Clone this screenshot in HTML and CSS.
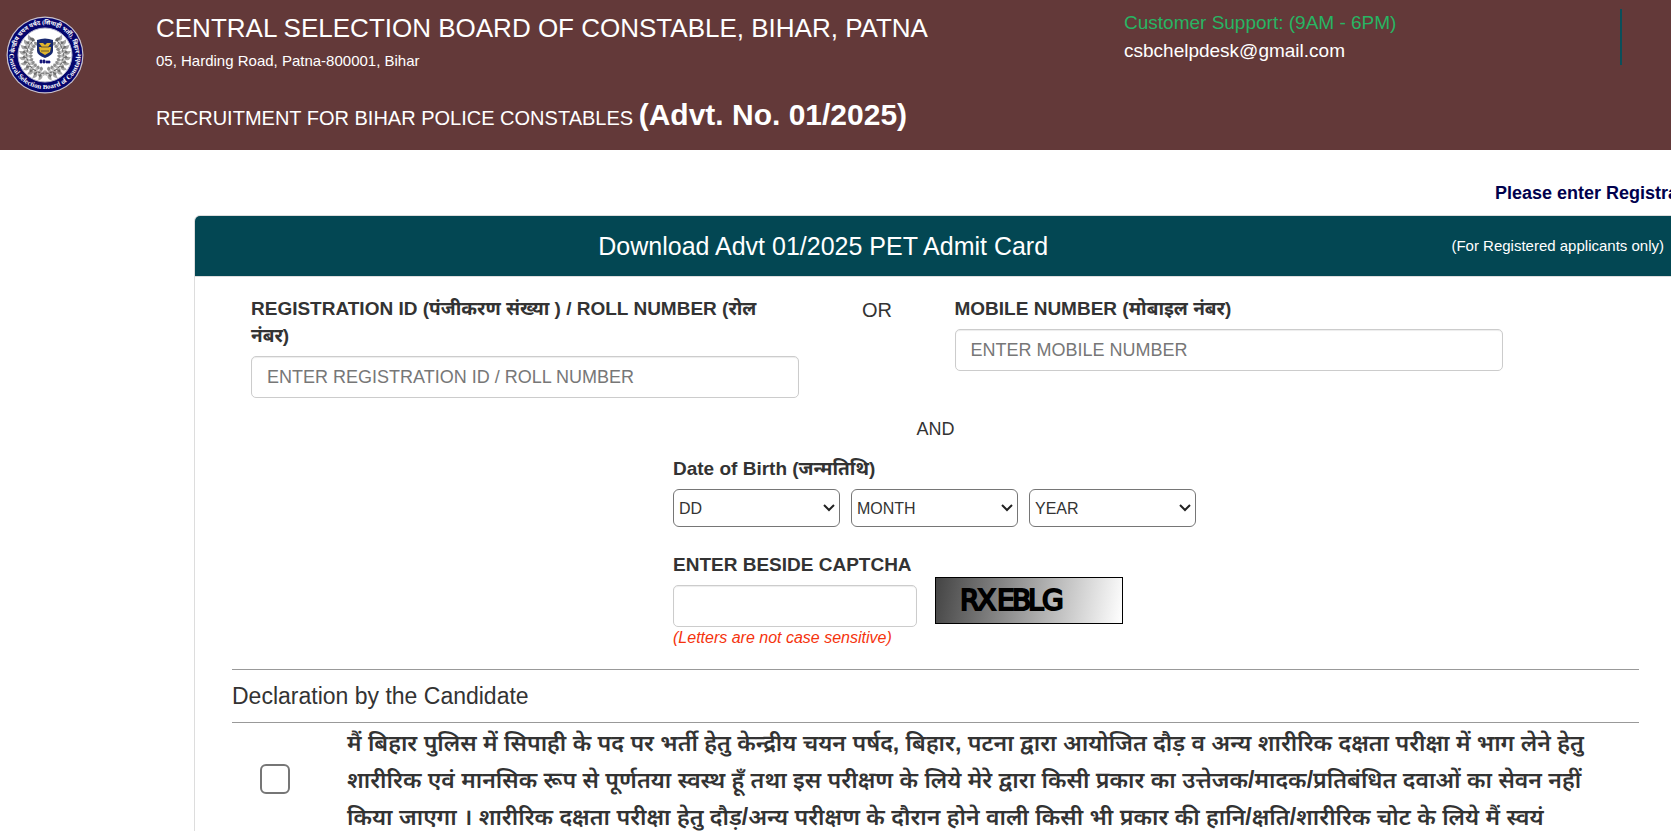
FILE: index.html
```html
<!DOCTYPE html>
<html lang="en">
<head>
<meta charset="utf-8">
<title>Central Selection Board of Constable, Bihar</title>
<link rel="stylesheet" href="styles.css">
</head>
<body>
<header class="site-header">
  <svg class="logo" viewBox="0 0 80 80" role="img" aria-label="Central Selection Board of Constable">
    <defs>
      <path id="arc-top" d="M12 52A30.500 30.500 0 1 1 68 52"/>
      <path id="arc-bottom" d="M4 38A36 36 0 0 0 76 38"/>
      <g id="sprig">
        <path d="M37 66q-1-5 3-6q2 4-3 6z" fill="#a5a5a5"/>
        <path d="M38 63q-4-3-1-6q4 2 1 6z" fill="#6f6f6f"/>
        <path d="M38 57q-3-3 0-5q4 2 0 5z" fill="#8f8f8f"/>
        <path d="M41 61q-3-4 1-6q3 4-1 6z" fill="#bcbcbc"/>
        <path d="M37 59l5-1" stroke="#555" stroke-width=".8"/>
      </g>
      <g id="branch">
        <use href="#sprig" transform="rotate(8 40 40)"/>
        <use href="#sprig" transform="rotate(22 40 40)"/>
        <use href="#sprig" transform="rotate(36 40 40)"/>
        <use href="#sprig" transform="rotate(50 40 40)"/>
        <use href="#sprig" transform="rotate(64 40 40)"/>
        <use href="#sprig" transform="rotate(78 40 40)"/>
        <use href="#sprig" transform="rotate(92 40 40)"/>
        <use href="#sprig" transform="rotate(106 40 40)"/>
        <use href="#sprig" transform="rotate(120 40 40)"/>
        <use href="#sprig" transform="rotate(134 40 40)"/>
      </g>
    </defs>
    <circle cx="40" cy="40" r="38.500" fill="#c9c3cf"/>
    <circle cx="40" cy="40" r="37.300" fill="#06066e"/>
    <circle cx="40" cy="40" r="27" fill="#fff" stroke="#b9b9cc" stroke-width="1"/>
    <text class="logo-text logo-text-top"><textPath href="#arc-top" startOffset="50%" text-anchor="middle">केन्द्रीय चयन पर्षद (सिपाही भर्ती), बिहार</textPath></text>
    <text class="logo-text"><textPath href="#arc-bottom" startOffset="50%" text-anchor="middle">Central Selection Board of Constable</textPath></text>
    <use href="#branch"/>
    <use href="#branch" transform="translate(80 0) scale(-1 1)"/>
    <path d="M32 25q8-3 16 0v11q0 4-8 7q-8-3-8-7z" fill="#17286f"/>
    <path d="M34 28h4l2 2 2-2h4l-3 4h3l-1 5-5 3-5-3-1-5h3z" fill="#e0b62c"/>
    <path d="M36 32h8M36 36h8" stroke="#6a5a30" stroke-width="1"/>
    <path d="M35 45h2v3h-2zM38 45h2v3h-2zM41 46h4v2h-4z" fill="#17177a" stroke="#17177a" stroke-width=".7"/>
  </svg>
  <div class="board">
    <h1 class="board-name">CENTRAL SELECTION BOARD OF CONSTABLE, BIHAR, PATNA</h1>
    <p class="board-address">05, Harding Road, Patna-800001, Bihar</p>
    <p class="board-advt">RECRUITMENT FOR BIHAR POLICE CONSTABLES <strong>(Advt. No. 01/2025)</strong></p>
  </div>
  <div class="support">
    <p class="support-hours">Customer Support: (9AM - 6PM)</p>
    <a class="support-mail" href="mailto:csbchelpdesk@gmail.com">csbchelpdesk@gmail.com</a>
  </div>
</header>
<main class="main">
  <div class="notice">Please enter Registration ID or Mobile Number</div>
  <form class="panel">
    <div class="panel-heading">
      <h2 class="panel-title">Download Advt 01/2025 PET Admit Card</h2>
      <span class="panel-note">(For Registered applicants only)</span>
    </div>
    <div class="panel-body">
      <div class="ids">
        <div class="field">
          <label class="label" for="reg">REGISTRATION ID (पंजीकरण संख्या ) / ROLL NUMBER (रोल<br>नंबर)</label>
          <input class="input" id="reg" type="text" placeholder="ENTER REGISTRATION ID / ROLL NUMBER">
        </div>
        <div class="or">OR</div>
        <div class="field">
          <label class="label" for="mobile">MOBILE NUMBER (मोबाइल नंबर)</label>
          <input class="input" id="mobile" type="text" placeholder="ENTER MOBILE NUMBER">
        </div>
      </div>
      <div class="and">AND</div>
      <div class="verify">
        <label class="label" for="dd">Date of Birth (जन्मतिथि)</label>
        <div class="dates">
          <select class="select" id="dd"><option>DD</option></select>
          <select class="select" aria-label="Month"><option>MONTH</option></select>
          <select class="select" aria-label="Year"><option>YEAR</option></select>
        </div>
        <div class="captcha-row">
          <div class="captcha-field">
            <label class="label" for="captcha">ENTER BESIDE CAPTCHA</label>
            <input class="input" id="captcha" type="text">
            <p class="hint">(Letters are not case sensitive)</p>
          </div>
          <svg class="captcha" viewBox="0 0 186 45" role="img" aria-label="Captcha">
            <text class="captcha-text" x="24 41 61 76 92 106" y="32">RXEBLG</text>
          </svg>
        </div>
      </div>
      <h3 class="declaration-title">Declaration by the Candidate</h3>
      <div class="declaration">
        <input class="check" id="agree" type="checkbox">
        <label class="declaration-text" for="agree">मैं बिहार पुलिस में सिपाही के पद पर भर्ती हेतु केन्द्रीय चयन पर्षद, बिहार, पटना द्वारा आयोजित दौड़ व अन्य शारीरिक दक्षता परीक्षा में भाग लेने हेतु<br>शारीरिक एवं मानसिक रूप से पूर्णतया स्वस्थ हूँ तथा इस परीक्षण के लिये मेरे द्वारा किसी प्रकार का उत्तेजक/मादक/प्रतिबंधित दवाओं का सेवन नहीं<br>किया जाएगा । शारीरिक दक्षता परीक्षा हेतु दौड़/अन्य परीक्षण के दौरान होने वाली किसी भी प्रकार की हानि/क्षति/शारीरिक चोट के लिये मैं स्वयं</label>
      </div>
    </div>
  </form>
</main>
</body>
</html>
```
FILE: styles.css
```css
* { box-sizing: border-box; }
body {
  margin: 0;
  overflow: hidden;
  background: #fff;
  color: #333;
  font-family: "Liberation Sans", "Noto Sans Devanagari", "Noto Sans", sans-serif;
  font-size: 18px;
}
h1, h2, h3, p { margin: 0; font-weight: 400; }

.site-header {
  display: flex;
  align-items: flex-start;
  min-height: 150px;
  padding: 9px 49px 0 5px;
  background: #633939;
  color: #fff;
}
.logo { flex: none; width: 80px; margin: 6px 71px 0 0; }
.logo-text { font: bold 7px "Liberation Serif", "Noto Sans Devanagari", serif; fill: #fff; }
.logo-text-top { font-size: 6px; }
.board { flex: 1; }
.board-name { font-size: 26px; line-height: 38px; }
.board-address { font-size: 15px; line-height: 28px; }
.board-advt { margin-top: 20px; font-size: 20px; line-height: 40px; }
.board-advt strong { font-size: 30px; }
.support { width: 498px; height: 56px; border-right: 2px solid #0b4f5a; }
.support-hours { color: #28b463; font-size: 19px; line-height: 28px; }
.support-mail { color: #fff; font-size: 19px; line-height: 28px; text-decoration: none; }

.main { padding-left: 194px; }
.notice {
  height: 65px;
  padding: 30px 0 0 1301px;
  overflow: hidden;
  color: #00004d;
  font-size: 18px;
  font-weight: 700;
  line-height: 27px;
  white-space: nowrap;
}
.panel { margin-right: -6px; border: 1px solid #ddd; border-radius: 6px; }
.panel-heading {
  display: flex;
  align-items: center;
  height: 61px;
  padding-right: 12px;
  border-bottom: 1px solid #ddd;
  border-radius: 5px 5px 0 0;
  background: #034753;
  color: #fff;
}
.panel-title { flex: 1; font-size: 25px; line-height: 30px; text-align: center; }
.panel-note { font-size: 15px; line-height: 30px; }
.panel-body { padding: 18px 37px 0; }

.ids { display: grid; grid-template-columns: 5fr 1fr 5fr 1fr; }
.field { padding: 0 19px; }
.label { display: block; margin-bottom: 7px; font-size: 19px; font-weight: 700; line-height: 27px; white-space: nowrap; }
.input {
  display: block;
  width: 100%;
  height: 42px;
  padding: 6px 15px;
  border: 1px solid #ccc;
  border-radius: 5px;
  box-shadow: inset 0 1px 1px rgba(0, 0, 0, .075);
  color: #555;
  font: 18px "Liberation Sans", sans-serif;
}
.input::placeholder { color: #777; }
.or { font-size: 20px; line-height: 30px; text-align: center; }
.and { margin-top: 18px; font-size: 18px; line-height: 27px; text-align: center; }
.verify { margin: 12px 0 20px 441px; }
.dates { display: flex; gap: 11px; }
.select {
  appearance: none;
  width: 167px;
  height: 38px;
  padding: 0 5px;
  border: 1px solid #767676;
  border-radius: 6px;
  background: #fff url("data:image/svg+xml,%3Csvg xmlns='http://www.w3.org/2000/svg' width='12' height='8'%3E%3Cpath d='M1 1l5 5 5-5' fill='none' stroke='%23222' stroke-width='2'/%3E%3C/svg%3E") no-repeat right 4px center;
  color: #333;
  font: 16px "Liberation Sans", sans-serif;
}
.captcha-row { display: flex; gap: 18px; margin-top: 24px; }
.captcha-field { width: 244px; }
.hint { color: #f5330d; font-size: 16px; font-style: italic; line-height: 22px; }
.captcha {
  width: 188px;
  height: 47px;
  margin-top: 26px;
  border: 1px solid #000;
  background: linear-gradient(100deg, #444, #fff);
}
.captcha-text { fill: #000; stroke: #000; stroke-width: 2px; font: 28px "DejaVu Sans", sans-serif; }
.declaration-title {
  padding: 10px 0;
  border: solid #999;
  border-width: 1px 0;
  font-size: 23px;
  line-height: 32px;
}
.declaration { display: flex; padding: 2px 60px 0 28px; }
.check {
  flex: none;
  appearance: none;
  width: 30px;
  height: 30px;
  margin: 39px 57px 0 0;
  border: 2px solid #767676;
  border-radius: 6px;
  background: #fff;
}
.check:checked { background: #034753; }
.declaration-text { flex: 1; font-size: 23px; font-weight: 600; line-height: 37px; white-space: nowrap; }
```
